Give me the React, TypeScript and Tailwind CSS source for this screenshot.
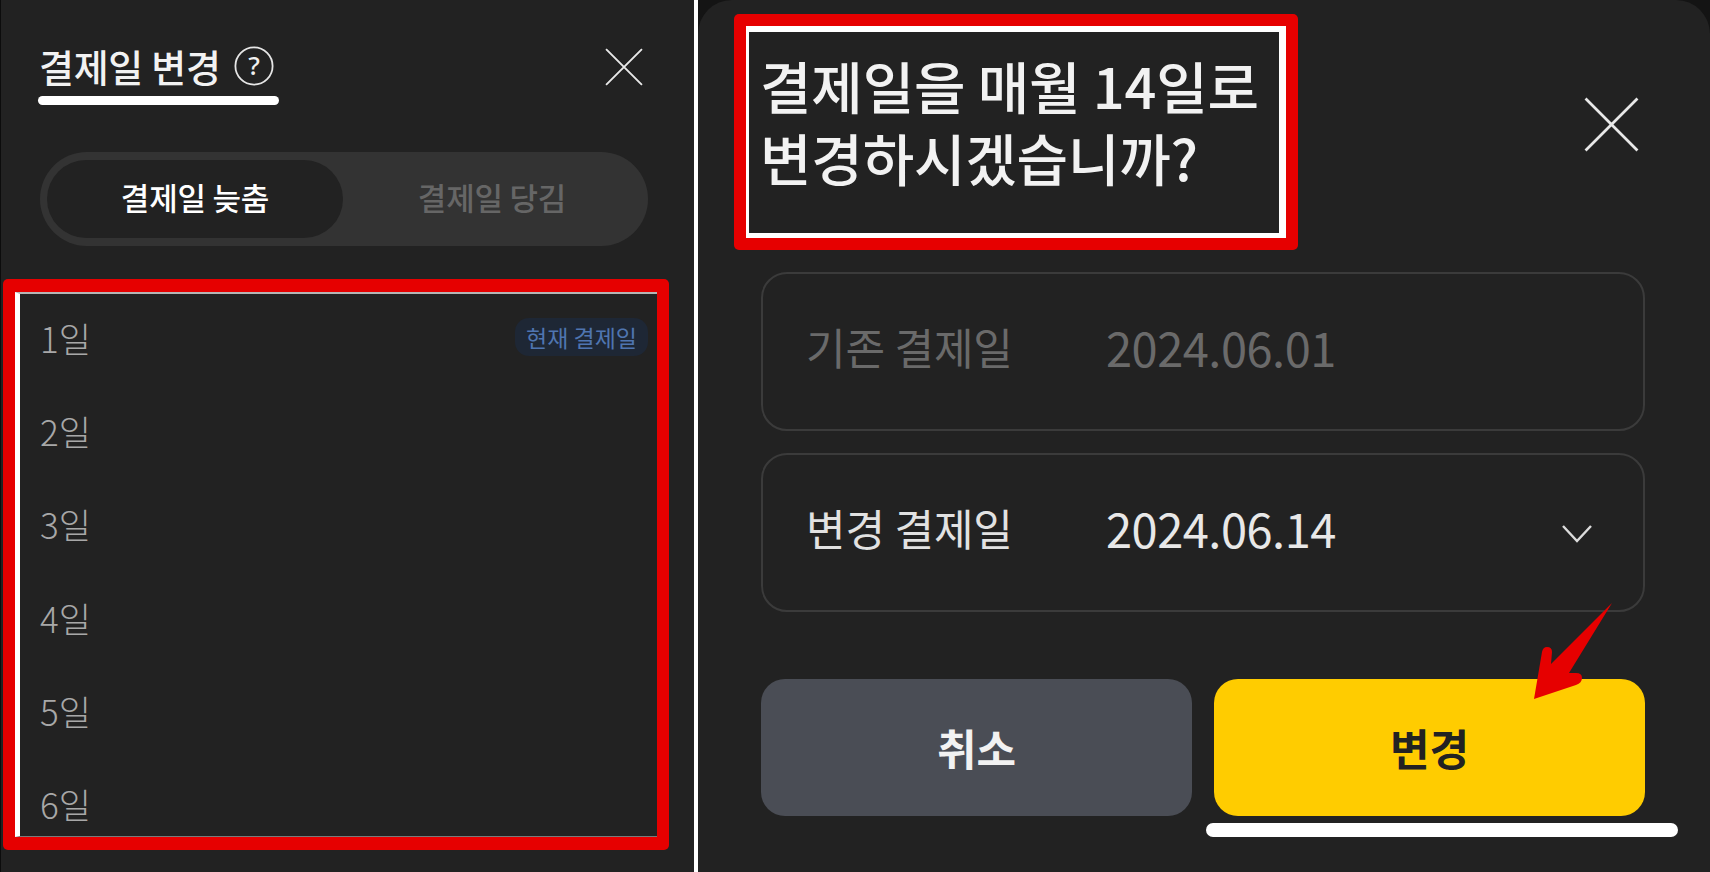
const KR = "font-['Noto_Sans_CJK_KR','Noto_Sans',sans-serif]";

const days = ["1일", "2일", "3일", "4일", "5일", "6일"];

const CloseIcon = ( { size }: { size: number } ) => (
    <svg width={ size } height={ size } viewBox="0 0 36 36" fill="none" stroke="#e8e8e8" strokeWidth="1.8" className="shrink-0">
        <path d="M1 1 L35 35 M35 1 L1 35" />
    </svg>
);

const DateBox = ( { label, value, dim, open }: { label: string; value: string; dim?: boolean; open?: boolean } ) => (
    <div className="flex h-[159px] items-center rounded-[26px] border-2 border-[#3b3b3b] pb-[10px] pl-[43px] pr-[50px]">
        <span className={ `w-[300px] text-[43px] leading-none font-normal tracking-[-0.1px] ${ dim ? "text-[#6a6a6a]" : "text-[#e2e2e2]" }` }>{ label }</span>
        <span className={ `flex-1 text-[47px] leading-none font-normal tracking-[-0.5px] ${ dim ? "text-[#6a6a6a]" : "text-[#e8e8e8]" }` }>{ value }</span>
        { open && (
            <svg width="32" height="20" viewBox="0 0 32 20" fill="none" stroke="#dcdcdc" strokeWidth="2.4" className="mt-[12px] shrink-0">
                <path d="M2 2 L16 17 L30 2" />
            </svg>
        ) }
    </div>
);

const LeftPanel = () => (
    <div className="flex h-full w-[694px] shrink-0 flex-col border-l border-l-[#0c0c0c] bg-[#222222]">
        <div className="flex items-start justify-between pt-[46px] pl-[37px] pr-[51px]">
            <div className="flex w-[241px] flex-col">
                <div className="flex h-[40px] items-center justify-between pl-[1px] pr-[5px]">
                    <span className="text-[38px] leading-none font-medium tracking-[-0.3px] whitespace-nowrap text-[#f2f2f2]">결제일 변경</span>
                    <svg width="40" height="40" viewBox="0 0 40 40" fill="none" className="shrink-0">
                        <circle cx="20" cy="20" r="18.6" stroke="#e6e6e6" strokeWidth="1.8" />
                        <text x="20" y="29" textAnchor="middle" fontSize="26" fontWeight="500" fill="#f0f0f0" fontFamily="Noto Sans">?</text>
                    </svg>
                </div>
                <div className="mt-[10px] h-[9px] rounded-full bg-white" />
            </div>
            <div className="mt-[2px]">
                <CloseIcon size={ 38 } />
            </div>
        </div>

        <div className="mt-[47px] ml-[39px] flex h-[94px] w-[608px] items-center rounded-full bg-[#333333] p-[7px]">
            <div className="flex h-[78px] w-[296px] items-center justify-center rounded-full bg-[#222222] pb-[3px] text-[31px] font-medium tracking-[-0.2px] text-white">결제일 늦춤</div>
            <div className="flex flex-1 items-center justify-center pb-[3px] text-[31px] font-medium tracking-[-0.2px] text-[#666666]">결제일 당김</div>
        </div>

        <div className="mt-[33px] ml-[2px] h-[571px] w-[666px] rounded-[5px] bg-[#e60000] py-[13px] pr-[12px] pl-[12px]">
            <div className="flex h-full flex-col gap-[23.4px] overflow-hidden border-t-2 border-b border-l-[5px] border-t-[#b5b5b5] border-b-[#7a7a7a] border-l-white bg-[#222222] pt-[8px] pl-[20px] pr-[9px]">
                { days.map( ( day, i ) => (
                    <div key={ day } className="flex h-[70px] shrink-0 items-center justify-between">
                        <span className="text-[35px] leading-none font-light text-[#a8a8a8]">{ day }</span>
                        { i === 0 && (
                            <span className="rounded-[14px] bg-[#1e2735] px-[11px] py-[6px] text-[23px] leading-[26px] text-[#4f75b0]">현재 결제일</span>
                        ) }
                    </div>
                ) ) }
            </div>
        </div>
    </div>
);

const RightPanel = () => (
    <div className="relative h-full w-[1012px] shrink-0 rounded-t-[34px] bg-[#222222] pl-[36px] pr-[65px]">
        <div className="flex items-start justify-between pt-[14px]">
            <div className="h-[236px] w-[564px] rounded-[5px] bg-[#e60000] p-[12px]">
                <div className="flex h-full flex-col border-t-[6px] border-r-[7px] border-b-[5px] border-l-[3px] border-white bg-[#222222] pt-[17px] pl-[11px]">
                    <p className="text-[56px] leading-[72px] font-medium tracking-[-0.2px] whitespace-pre-line text-[#f2f2f2]">
                        { "결제일을 매월 14일로\n변경하시겠습니까?" }
                    </p>
                </div>
            </div>
            <div className="mt-[83px] mr-[6px]">
                <CloseIcon size={ 55 } />
            </div>
        </div>

        <div className="ml-[27px] mt-[22px] flex flex-col gap-[22px]">
            <DateBox label="기존 결제일" value="2024.06.01" dim />
            <DateBox label="변경 결제일" value="2024.06.14" open />
        </div>

        <div className="ml-[27px] mt-[67px] flex gap-[22px]">
            <button className="flex h-[137px] flex-1 items-center justify-center rounded-[24px] bg-[#4a4d55] text-[43px] font-bold text-[#f2f2f2]">취소</button>
            <button className="flex h-[137px] flex-1 items-center justify-center rounded-[24px] bg-[#ffcc00] text-[43px] font-bold text-[#222222]">변경</button>
        </div>
        <div className="mt-[7px] ml-[472px] h-[14px] w-[472px] rounded-full bg-white" />

        {/* annotation arrow */}
        <svg width="90" height="106" viewBox="0 0 90 106" className="absolute top-[600px] left-[834px]">
            <path d="M80 3 L37 73 L44 73 Q50 73 50 78 Q50 83 44 85 L2 99 L10 52 Q11 47 15 47 Q20 47 20 52 L19 64 Z" fill="#e60000" />
        </svg>
    </div>
);

const App = () =>
{
    return (
        <div className={ `flex h-[872px] w-[1710px] overflow-hidden bg-[#141414] ${ KR }` }>
            <LeftPanel />
            <div className="h-full w-[4px] shrink-0 bg-white" />
            <RightPanel />
        </div>
    );
};

export default App;
